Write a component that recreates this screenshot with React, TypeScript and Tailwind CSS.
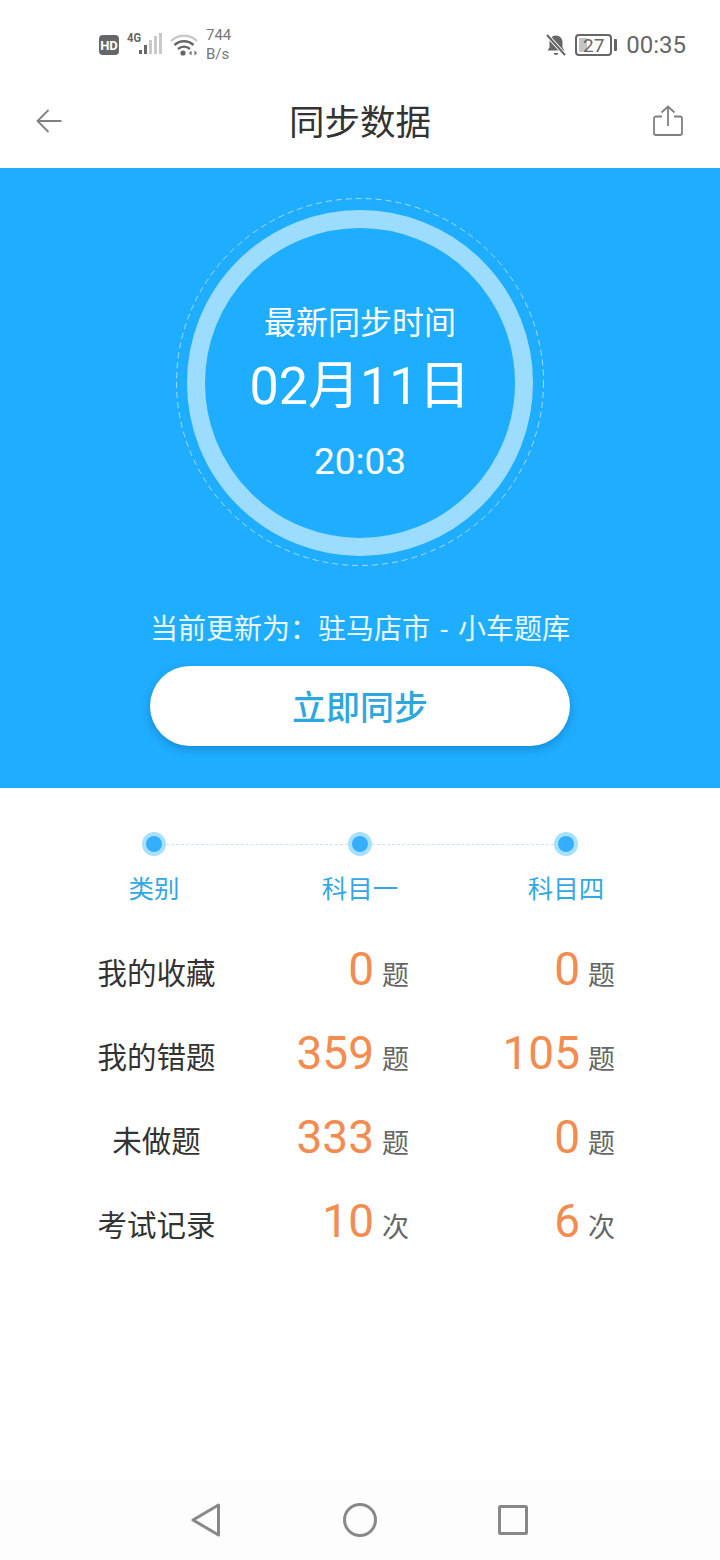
const FONT = "font-['Roboto','Noto_Sans_CJK_SC',sans-serif]";

const rows = [
  { label: '我的收藏', one: '0', four: '0', unit: '题' },
  { label: '我的错题', one: '359', four: '105', unit: '题' },
  { label: '未做题', one: '333', four: '0', unit: '题' },
  { label: '考试记录', one: '10', four: '6', unit: '次' },
];

function StatusBar() {
  return (
    <div className="flex h-[84px] items-center pl-[99px] pr-[34px] pt-[6px] text-[#666666]">
      {/* HD badge */}
      <div className="flex h-[20px] w-[20px] items-center justify-center rounded-[4px] bg-[#666666] text-[13px] font-bold leading-none text-white">
        HD
      </div>
      <svg className="ml-[7px]" width="38" height="30" viewBox="0 0 38 30">
        <text x="1" y="12" fontSize="12.5" fontWeight="700" fill="#666666" fontFamily="Roboto" textLength="14" lengthAdjust="spacingAndGlyphs">4G</text>
        <rect x="13" y="20" width="3" height="4" fill="#666666" />
        <rect x="18" y="15" width="3" height="9" fill="#666666" />
        <rect x="23" y="10" width="3" height="14" fill="#c9c9c9" />
        <rect x="28" y="6" width="3" height="18" fill="#c9c9c9" />
        <rect x="33" y="3" width="3" height="21" fill="#c9c9c9" />
      </svg>
      <svg className="ml-[6px]" width="28" height="24" viewBox="0 0 28 24" fill="none">
        <path d="M1 8C8 1 20 1 27 8" stroke="#c9c9c9" strokeWidth="2.4" />
        <path d="M4.500 12C10 7 18 7 23.500 12" stroke="#666666" strokeWidth="2.4" />
        <path d="M8 16C11.500 12.800 16.500 12.800 20 16" stroke="#666666" strokeWidth="2.4" />
        <circle cx="13" cy="20" r="2.600" fill="#666666" />
        <path d="M19 20l2.500-2.600v5.200zM27 20l-2.500-2.600v5.200z" fill="#666666" />
      </svg>
      <div className="ml-[8px] flex flex-col text-[15px] leading-[19px] text-[#777777]">
        <span>744</span>
        <span>B/s</span>
      </div>
      <svg className="ml-auto" width="22" height="24" viewBox="0 0 22 24" fill="none">
        <path d="M11 2.500c-4 0-6.500 3-6.500 7v5L2.500 17.500h17l-2-3v-5c0-4-2.500-7-6.500-7z" fill="#666666" />
        <path d="M8.500 20a2.600 2.600 0 0 0 5 0z" fill="#666666" />
        <path d="M2 2l18 20" stroke="#ffffff" strokeWidth="4" />
        <path d="M2 2l18 20" stroke="#666666" strokeWidth="2" />
      </svg>
      <div className="relative ml-[8px] flex h-[22px] w-[37px] items-center justify-center rounded-[4px] border-2 border-[#666666] text-[19px] leading-none">
        <div className="absolute bottom-[2px] left-[2px] top-[2px] w-[8px] bg-[#c4c4c4]" />
        <span className="relative">27</span>
      </div>
      <div className="ml-[2px] h-[12px] w-[3px] rounded-r-[1px] bg-[#666666]" />
      <span className="ml-[9px] text-[24px] leading-none">00:35</span>
    </div>
  );
}

function NavHeader() {
  return (
    <div className="flex h-[84px] items-center justify-between pb-[4px] pl-[36px] pr-[37px]">
      <div className="-mt-[6px] w-[31px]">
        <svg width="26" height="26" viewBox="0 0 26 26" fill="none" stroke="#808080" strokeWidth="1.8">
          <path d="M25.500 13H1.500M12.500 2L1.500 13l11 11" />
        </svg>
      </div>
      <h1 className="text-[35.500px] font-normal leading-none text-[#333333]">同步数据</h1>
      <svg className="-mt-[6px]" width="30" height="32" viewBox="0 0 30 32" fill="none" stroke="#808080" strokeWidth="1.8">
        <path d="M15 21V1.500M8.500 7.500L15 1.500l6.500 6M9 11.500H3a2 2 0 0 0-2 2V28a2 2 0 0 0 2 2h24a2 2 0 0 0 2-2V13.500a2 2 0 0 0-2-2h-6" />
      </svg>
    </div>
  );
}

function Step({ label }: { label: string }) {
  return (
    <div className="flex w-[206px] justify-center text-[25.500px] leading-none text-[#33a8e4]">{label}</div>
  );
}

function Dot() {
  return (
    <div className="flex h-[24px] w-[24px] shrink-0 items-center justify-center rounded-full bg-[#a8e0ff]">
      <div className="h-[16px] w-[16px] rounded-full bg-[#36aeff]" />
    </div>
  );
}

function Value({ n, unit }: { n: string; unit: string }) {
  return (
    <div className="mb-[8px] flex w-[206px] items-baseline justify-end pr-[54px]">
      <span className="text-[46px] leading-none text-[#f28c50]">{n}</span>
      <span className="ml-[8px] text-[27px] leading-none text-[#666666]">{unit}</span>
    </div>
  );
}

export default function App() {
  return (
    <div className={`flex min-h-[1560px] w-[720px] flex-col bg-white ${FONT}`}>
      <StatusBar />
      <NavHeader />

      {/* Blue sync panel */}
      <div className="flex h-[620px] flex-col items-center bg-[#1fadff] pt-[30px]">
        <div className="relative flex h-[368px] w-[368px] items-center justify-center">
          {/* dashed halo */}
          <svg className="absolute inset-0" width="368" height="368" viewBox="0 0 368 368" fill="none">
            <circle cx="184" cy="184" r="183.500" stroke="#a5dcff" strokeWidth="1" strokeDasharray="6 4" />
          </svg>
          <div className="mt-[2px] flex h-[346px] w-[346px] flex-col items-center rounded-full border-[18px] border-[#9bdcff] pt-[79px] text-white">
            <span className="text-[32px] leading-none">最新同步时间</span>
            <span className="mt-[22px] text-[52px] leading-none">02月11日</span>
            <span className="mt-[30px] text-[37px] leading-none">20:03</span>
          </div>
        </div>
        <p className="mt-[50px] flex text-[28px] leading-none text-white/90">
          <span>当前更新为：驻马店市</span>
          <span className="w-[28px] text-center">-</span>
          <span>小车题库</span>
        </p>
        <button className="mt-[22px] h-[80px] w-[420px] rounded-full bg-white pt-[4px] text-[34px] font-medium text-[#2ea7e0] shadow-[0_3px_8px_rgba(0,60,110,0.3)]">
          立即同步
        </button>
      </div>

      {/* Subject table */}
      <div className="flex flex-col px-[51px] pt-[44px]">
        <div className="flex items-center px-[91px]">
          <Dot />
          <div className="h-0 flex-1 border-t border-dashed border-[#c5e6f3]" />
          <Dot />
          <div className="h-0 flex-1 border-t border-dashed border-[#c5e6f3]" />
          <Dot />
        </div>
        <div className="mt-[21px] flex">
          <Step label="类别" />
          <Step label="科目一" />
          <Step label="科目四" />
        </div>
        <div className="mt-[28px] flex flex-col">
          {rows.map((row) => (
            <div key={row.label} className="flex h-[84px] items-center">
              <div className="w-[206px] pl-[5px] pt-[4px] text-center text-[29.500px] leading-none text-[#333333]">{row.label}</div>
              <Value n={row.one} unit={row.unit} />
              <Value n={row.four} unit={row.unit} />
            </div>
          ))}
        </div>
      </div>

      {/* System nav */}
      <div className="mt-auto flex h-[80px] items-center justify-between bg-[#fdfdfd] pl-[191px] pr-[192px]">
        <svg width="30" height="34" viewBox="0 0 30 34" fill="none" stroke="#888888" strokeWidth="3" strokeLinejoin="round">
          <path d="M2 17L27.500 2v30z" />
        </svg>
        <svg width="34" height="34" viewBox="0 0 34 34" fill="none" stroke="#888888" strokeWidth="3">
          <circle cx="17" cy="17" r="15.500" />
        </svg>
        <svg width="30" height="30" viewBox="0 0 30 30" fill="none" stroke="#888888" strokeWidth="3" strokeLinejoin="round">
          <rect x="1.500" y="1.500" width="27" height="27" rx="1" />
        </svg>
      </div>
    </div>
  );
}
